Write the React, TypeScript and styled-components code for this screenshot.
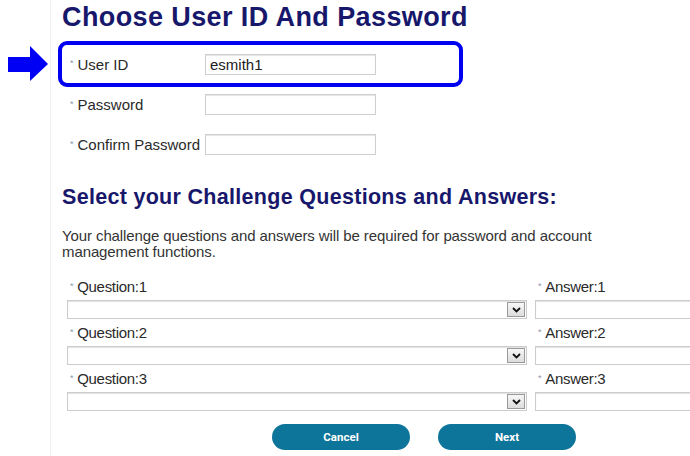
import React from 'react';
import styled, { createGlobalStyle } from 'styled-components';

const GlobalStyle = createGlobalStyle`
  html, body {
    margin: 0;
    padding: 0;
    background: #ffffff;
  }
  body {
    font-family: "Liberation Sans", Arial, sans-serif;
    color: #222;
  }
`;

const Page = styled.div`
  width: 690px;
  height: 456px;
  overflow: hidden;
  background-image: linear-gradient(to right, transparent 50px, #f1f1f1 50px, #f1f1f1 51px, transparent 51px);
`;

const Title = styled.h1`
  margin: 2px 0 0 62px;
  font-size: 27px;
  line-height: 31px;
  font-weight: bold;
  color: #17176b;
  letter-spacing: 0.4px;
`;

const Highlight = styled.div`
  display: flex;
  align-items: center;
  margin: 8px 0 0 8px;
`;

const Arrow = styled.svg`
  width: 40px;
  height: 36px;
  flex: none;
  margin-right: 10px;
`;

const Box = styled.div`
  width: 389px;
  height: 38px;
  border: 4px solid #0000f0;
  border-radius: 9px;
  display: flex;
  align-items: center;
  padding-left: 8px;
  box-sizing: content-box;
`;

const Row = styled.div<{ $top: number }>`
  display: flex;
  align-items: center;
  margin: ${p => p.$top}px 0 0 70px;
`;

const Star = styled.span`
  font-size: 9px;
  color: #8f97a8;
  margin-right: 4px;
  position: relative;
  top: -1px;
`;

const Label = styled.label<{ $w?: number }>`
  width: ${p => (p.$w ? `${p.$w}px` : 'auto')};
  font-size: 15px;
  color: #2a2a2a;
  display: flex;
  align-items: center;
  white-space: nowrap;
`;

const TextInput = styled.div`
  width: 165px;
  height: 19px;
  border: 1px solid #cfcfcf;
  box-shadow: inset 0 1px 1px #e4e4e4;
  font-size: 15px;
  line-height: 19px;
  padding-left: 4px;
  box-sizing: content-box;
  color: #222;
`;

const SubTitle = styled.h2`
  margin: 30px 0 0 62px;
  font-size: 21.5px;
  line-height: 25px;
  font-weight: bold;
  color: #17176b;
  letter-spacing: 0.3px;
`;

const Intro = styled.p`
  margin: 18px 0 0 62px;
  width: 560px;
  font-size: 15px;
  line-height: 16px;
  color: #333;
  letter-spacing: -0.1px;
`;

const QuestionGrid = styled.div`
  display: grid;
  grid-template-columns: 460px 170px;
  column-gap: 8px;
  margin: 15px 0 0 67px;
`;

const QLabel = styled.div`
  display: flex;
  align-items: center;
  height: 25px;
  padding: 0 0 2px 3px;
  box-sizing: border-box;
  font-size: 15px;
  color: #2a2a2a;
  letter-spacing: -0.3px;
`;

const Select = styled.div`
  height: 17px;
  border: 1px solid #cccccc;
  box-shadow: inset 0 1px 1px #e2e2e2;
  display: flex;
  justify-content: flex-end;
  align-items: center;
  margin-bottom: 2px;
`;

const DropButton = styled.div`
  width: 18px;
  height: 15px;
  margin-right: 1px;
  border: 1px solid #9a9a9a;
  background: linear-gradient(#f7f7f7, #dcdcdc);
  display: flex;
  align-items: center;
  justify-content: center;
  box-sizing: border-box;
`;

const AnswerInput = styled.div`
  height: 17px;
  border: 1px solid #cccccc;
  box-shadow: inset 0 1px 1px #e2e2e2;
  margin-bottom: 2px;
`;

const Buttons = styled.div`
  display: flex;
  gap: 28px;
  margin: 11px 0 0 272px;
`;

const Button = styled.div`
  width: 138px;
  height: 26px;
  border-radius: 13px;
  background: #0d7599;
  color: #fff;
  font-family: Roboto, "Liberation Sans", sans-serif;
  font-weight: bold;
  font-size: 11.5px;
  display: flex;
  align-items: center;
  justify-content: center;
`;

const Chevron = () => (
  <svg width="9" height="6" viewBox="0 0 9 6">
    <polyline points="1,1 4.5,4.5 8,1" fill="none" stroke="#111" strokeWidth="1.8" />
  </svg>
);

const questions = [1, 2, 3];

export default function App() {
  return (
    <Page>
      <GlobalStyle />
      <Title>Choose User ID And Password</Title>
      <Highlight>
        <Arrow viewBox="0 0 40 36">
          <polygon points="0,11 22,11 22,0 40,18 22,35 22,26 0,26" fill="#0000f5" />
        </Arrow>
        <Box>
          <Label $w={135}><Star>*</Star>User ID</Label>
          <TextInput>esmith1</TextInput>
        </Box>
      </Highlight>
      <Row $top={7}>
        <Label $w={135}><Star>*</Star>Password</Label>
        <TextInput />
      </Row>
      <Row $top={19}>
        <Label $w={135}><Star>*</Star>Confirm Password</Label>
        <TextInput />
      </Row>
      <SubTitle>Select your Challenge Questions and Answers:</SubTitle>
      <Intro>
        Your challenge questions and answers will be required for password and account management functions.
      </Intro>
      <QuestionGrid>
        {questions.map(n => (
          <React.Fragment key={n}>
            <QLabel><Star>*</Star>Question:{n}</QLabel>
            <QLabel><Star>*</Star>Answer:{n}</QLabel>
            <Select>
              <DropButton><Chevron /></DropButton>
            </Select>
            <AnswerInput />
          </React.Fragment>
        ))}
      </QuestionGrid>
      <Buttons>
        <Button>Cancel</Button>
        <Button>Next</Button>
      </Buttons>
    </Page>
  );
}
